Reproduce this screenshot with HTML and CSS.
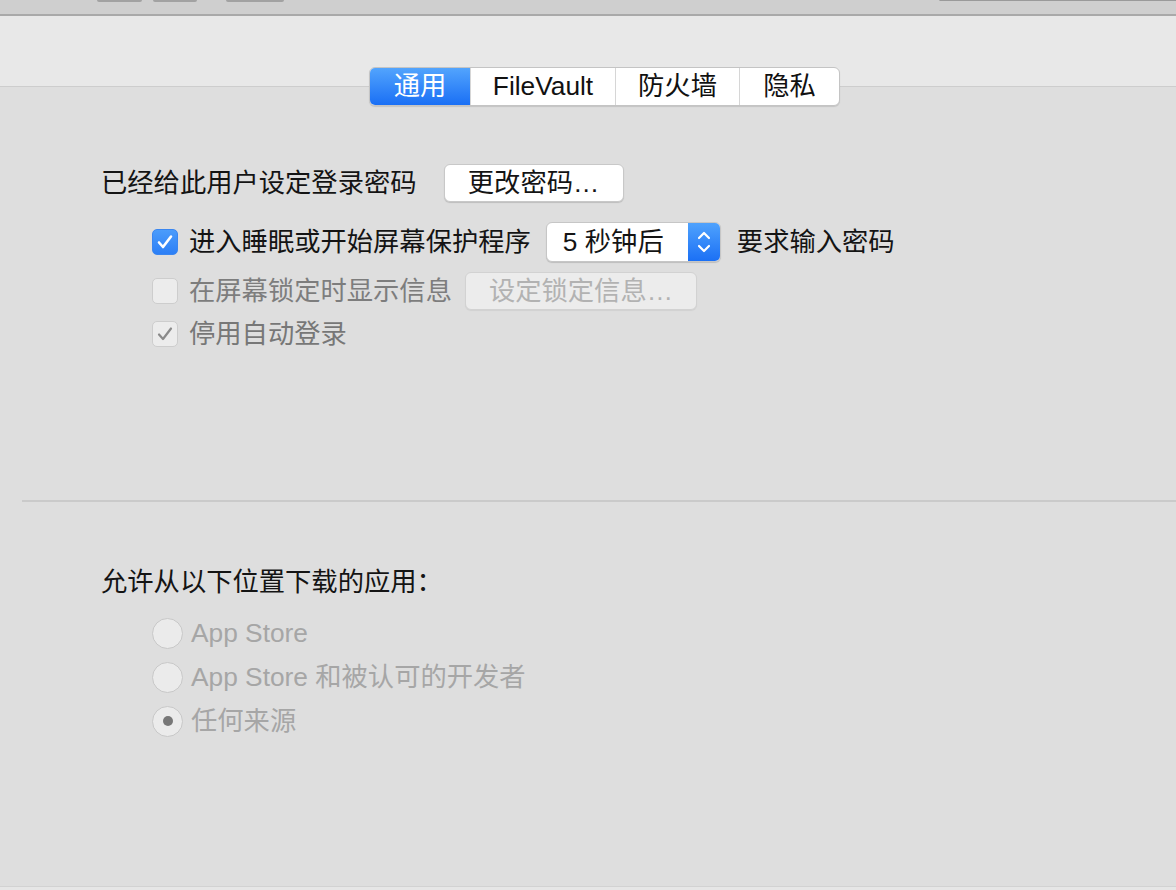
FILE: index.html
```html
<!DOCTYPE html>
<html lang="zh-CN">
<head>
<meta charset="utf-8">
<title>安全性与隐私</title>
<link rel="stylesheet" href="styles.css">
</head>
<body>
<div class="toolbar">
  <span class="tb-btn tb-a"></span>
  <span class="tb-btn tb-b"></span>
  <span class="tb-btn tb-c"></span>
  <span class="tb-search"></span>
</div>
<div class="header">
  <div class="tabs">
    <div class="tab tab-sel tw1">通用</div>
    <div class="tab tw2">FileVault</div>
    <div class="tab tw3">防火墙</div>
    <div class="tab tw4">隐私</div>
  </div>
</div>
<div class="panel">
  <div class="section-top">
    <div class="row row1">
      <span class="label">已经给此用户设定登录密码</span>
      <button class="btn btn-change">更改密码…</button>
    </div>
    <div class="row row2 indent">
      <span class="cb cb-on"><svg viewBox="0 0 26 26" width="26" height="26"><path d="M7 13.5 L11 18 L19 7.5" fill="none" stroke="#fff" stroke-width="2.6" stroke-linecap="round" stroke-linejoin="round"/></svg></span>
      <span class="label">进入睡眠或开始屏幕保护程序</span>
      <span class="popup">
        <span class="popup-text">5 秒钟后</span>
        <span class="popup-arrows"><svg viewBox="0 0 32 40" width="32" height="40"><path d="M11 16 L16 11 L21 16" fill="none" stroke="#fff" stroke-width="2.2" stroke-linecap="round" stroke-linejoin="round"/><path d="M11 24 L16 29 L21 24" fill="none" stroke="#fff" stroke-width="2.2" stroke-linecap="round" stroke-linejoin="round"/></svg></span>
      </span>
      <span class="label after-popup">要求输入密码</span>
    </div>
    <div class="row row3 indent">
      <span class="cb cb-dis"></span>
      <span class="label label-dis">在屏幕锁定时显示信息</span>
      <button class="btn btn-dis">设定锁定信息…</button>
    </div>
    <div class="row row4 indent">
      <span class="cb cb-dis"><svg viewBox="0 0 26 26" width="26" height="26"><path d="M7 13.5 L11 18 L19 7.5" fill="none" stroke="#8a8a8a" stroke-width="2.2" stroke-linecap="round" stroke-linejoin="round"/></svg></span>
      <span class="label label-dis2">停用自动登录</span>
    </div>
  </div>
  <div class="divider"></div>
  <div class="section-bottom">
    <div class="row heading"><span class="label">允许从以下位置下载的应用：</span></div>
    <div class="radio-row indent"><span class="radio"></span><span class="radio-label">App Store</span></div>
    <div class="radio-row indent"><span class="radio"></span><span class="radio-label">App Store 和被认可的开发者</span></div>
    <div class="radio-row indent"><span class="radio radio-on"><span class="dot"></span></span><span class="radio-label">任何来源</span></div>
  </div>
</div>
<div class="footer"></div>
</body>
</html>
```
FILE: styles.css
```css
html, body {
  margin: 0;
  padding: 0;
  height: 100%;
}
body {
  background: #dedede;
  font-family: "Liberation Sans", "Noto Sans CJK SC", sans-serif;
  font-size: 26.3px;
  color: #141414;
  display: flex;
  flex-direction: column;
  overflow: hidden;
}
.toolbar {
  height: 14px;
  flex: none;
  background: #cfcfcf;
  border-bottom: 2px solid #a9a9a9;
  display: flex;
  align-items: flex-start;
  padding-left: 97px;
}
.tb-btn {
  display: block;
  height: 2px;
  background: #a2a2a2;
  border-radius: 0 0 3px 3px;
}
.tb-a { width: 45px; }
.tb-b { width: 44px; margin-left: 11px; }
.tb-c { width: 58px; margin-left: 29px; }
.tb-search {
  margin-left: auto;
  width: 236px;
  height: 1px;
  background: #9a9a9a;
  border-left: 1px solid #b0b0b0;
}
.header {
  height: 70px;
  flex: none;
  background: #e8e8e8;
  border-bottom: 1px solid #cdcdcd;
  display: flex;
  align-items: flex-end;
  padding-left: 369px;
}
.tabs {
  position: relative;
  z-index: 1;
  margin-bottom: -20px;
  display: flex;
  height: 39px;
  box-sizing: border-box;
  border: 1px solid #c4c4c4;
  border-radius: 6px;
  background: #fff;
  box-shadow: 0 1px 1px rgba(0,0,0,0.12);
  overflow: hidden;
}
.tab {
  display: flex;
  align-items: center;
  justify-content: center;
  box-sizing: border-box;
  height: 100%;
  color: #111;
  line-height: 1;
  border-left: 1px solid #d6d6d6;
}
.tab:first-child { border-left: none; }
.tab-sel {
  background: linear-gradient(#52a4fd, #1a6ff5);
  color: #fff;
}
.tw1 { width: 100px; }
.tw2 { width: 145px; }
.tw3 { width: 124px; }
.tw4 { width: 100px; }
.panel {
  flex: 1;
  display: flex;
  flex-direction: column;
}
.section-top {
  padding-left: 101px;
  padding-top: 77px;
  height: 336px;
  box-sizing: border-box;
}
.row {
  display: flex;
  align-items: center;
}
.label {
  line-height: 1;
  white-space: nowrap;
}
.indent { padding-left: 51px; }
.row1 { height: 38px; }
.row2 { height: 40px; margin-top: 20px; }
.row3 { height: 38px; margin-top: 10px; }
.row4 { height: 38px; margin-top: 5px; }
.btn {
  font: inherit;
  box-sizing: border-box;
  height: 38px;
  border-radius: 6px;
  padding: 0;
  display: flex;
  align-items: center;
  justify-content: center;
  line-height: 1;
}
.btn-change {
  margin-left: 27px;
  width: 180px;
  background: #fff;
  color: #141414;
  border: 1px solid #c8c8c8;
  box-shadow: 0 1px 1px rgba(0,0,0,0.15);
}
.btn-dis {
  margin-left: 13px;
  width: 232px;
  background: #ececec;
  color: #b2b2b2;
  border: 1px solid #d2d2d2;
  box-shadow: 0 1px 1px rgba(0,0,0,0.06);
}
.cb {
  flex: none;
  width: 26px;
  height: 26px;
  box-sizing: border-box;
  border-radius: 5px;
  margin-right: 11px;
  display: block;
}
.cb svg { display: block; margin: -1px; }
.cb-on {
  background: linear-gradient(#4b9cfb, #2c7ff6);
  border: 1px solid #3a86f0;
}
.cb-dis {
  background: #ececec;
  border: 1px solid #cdcdcd;
}
.label-dis { color: #7d7d7d; }
.label-dis2 { color: #777; }
.popup {
  margin-left: 15px;
  display: flex;
  width: 175px;
  height: 40px;
  box-sizing: border-box;
  border: 1px solid #c6c6c6;
  border-radius: 6px;
  background: #fff;
  overflow: hidden;
  box-shadow: 0 1px 1px rgba(0,0,0,0.15);
}
.popup-text {
  flex: 1;
  display: flex;
  align-items: center;
  padding-left: 16px;
  line-height: 1;
  color: #141414;
}
.popup-arrows {
  width: 32px;
  flex: none;
  background: linear-gradient(#4fa2fd, #1b70f5);
  display: flex;
  align-items: center;
  justify-content: center;
}
.popup-arrows svg { display: block; }
.after-popup { margin-left: 16px; }
.divider {
  margin-top: 77px;
  margin-left: 22px;
  height: 2px;
  background: #cacaca;
}
.section-bottom {
  padding-left: 101px;
  padding-top: 61px;
}
.heading { height: 38px; }
.radio-row {
  display: flex;
  align-items: center;
  height: 44px;
}
.heading + .radio-row { margin-top: 10px; }
.radio {
  flex: none;
  width: 31px;
  height: 31px;
  box-sizing: border-box;
  border-radius: 50%;
  border: 1px solid #c8c8c8;
  background: #ebebeb;
  margin-right: 8px;
  display: flex;
  align-items: center;
  justify-content: center;
}
.dot {
  width: 10px;
  height: 10px;
  border-radius: 50%;
  background: #777;
}
.radio-label {
  color: #a6a6a6;
  line-height: 1;
  white-space: nowrap;
}
.footer {
  flex: none;
  height: 3px;
  border-top: 1px solid #d2d2d2;
  background: #e6e6e6;
}
```
